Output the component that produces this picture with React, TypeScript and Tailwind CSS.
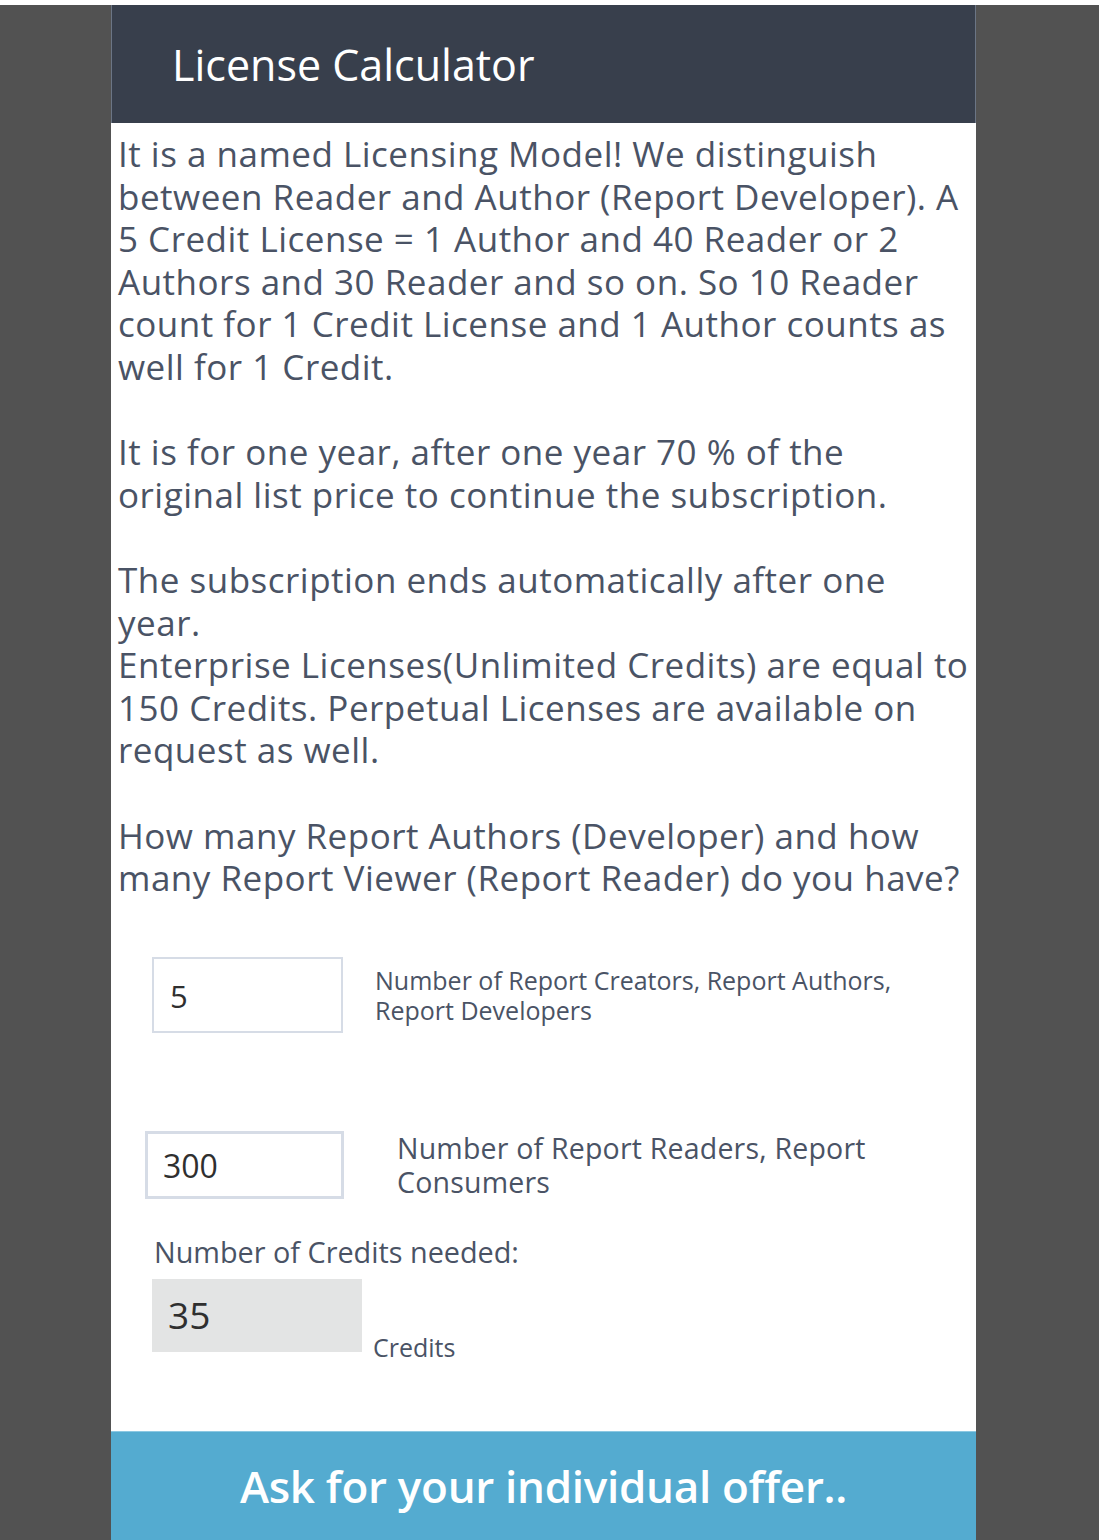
const font = { fontFamily: '"Open Sans", "Liberation Sans", sans-serif' };

const intro = [
  "It is a named Licensing Model! We distinguish",
  "between Reader and Author (Report Developer). A",
  "5 Credit License = 1 Author and 40 Reader or 2",
  "Authors and 30 Reader and so on. So 10 Reader",
  "count for 1 Credit License and 1 Author counts as",
  "well for 1 Credit.",
  "",
  "It is for one year, after one year 70 % of the",
  "original list price to continue the subscription.",
  "",
  "The subscription ends automatically after one",
  "year.",
  "Enterprise Licenses(Unlimited Credits) are equal to",
  "150 Credits. Perpetual Licenses are available on",
  "request as well.",
  "",
  "How many Report Authors (Developer) and how",
  "many Report Viewer (Report Reader) do you have?",
];

export default function App() {
  return (
    <div className="w-[1099px] h-[1540px] bg-white pt-[5px] overflow-hidden" style={font}>
      <div className="h-full bg-[#525252]">
        <div className="ml-[111px] w-[865px] h-full bg-white flex flex-col">
          <header className="h-[118px] bg-[#383f4c] border-x border-[#6b7585] flex items-center pl-[60px]">
            <h1 className="text-[43px] text-white leading-none">License Calculator</h1>
          </header>

          <div className="pl-[7px] pt-[10px] text-[35px] leading-[42.6px] tracking-[0.5px] text-[#4a5365]">
            {intro.map((l, i) => (
              <div key={i} className="whitespace-nowrap h-[42.6px]">
                {l}
              </div>
            ))}
          </div>

          <div className="flex items-start mt-[57px] ml-[41px]">
            <div className="w-[191px] h-[76px] border-2 border-[#d6dce6] flex items-center pl-[16px] pt-[3px] text-[31px] text-[#2f2f2f]">
              5
            </div>
            <div className="ml-[32px] mt-[8px] text-[25px] leading-[30px] text-[#4a5365]">
              Number of Report Creators, Report Authors,
              <br />
              Report Developers
            </div>
          </div>

          <div className="flex items-start mt-[98px] ml-[34px]">
            <div className="w-[199px] h-[68px] border-[3px] border-[#d6dce6] flex items-center pl-[15px] pt-[2px] text-[32px] text-[#2f2f2f]">
              300
            </div>
            <div className="ml-[53px] text-[28.5px] leading-[34px] tracking-[0.2px] text-[#4a5365]">
              Number of Report Readers, Report
              <br />
              Consumers
            </div>
          </div>

          <div className="ml-[43px] mt-[36px] text-[28.8px] leading-[34px] text-[#4a5365]">
            Number of Credits needed:
          </div>

          <div className="flex items-end ml-[41px] mt-[10px]">
            <div className="w-[210px] h-[73px] bg-[#e3e4e4] flex items-center pl-[16px] text-[37px] text-[#2f2f2f]">
              35
            </div>
            <div className="ml-[11px] mb-[-10px] text-[25px] leading-[30px] text-[#4a5365]">Credits</div>
          </div>

          <div className="flex-1" />

          <button className="h-[109px] w-full bg-[#54abd0] border-t border-[#8cc8e2] text-white text-[44px] font-semibold tracking-[-0.3px] flex items-center justify-center">
            Ask for your individual offer..
          </button>
        </div>
      </div>
    </div>
  );
}
